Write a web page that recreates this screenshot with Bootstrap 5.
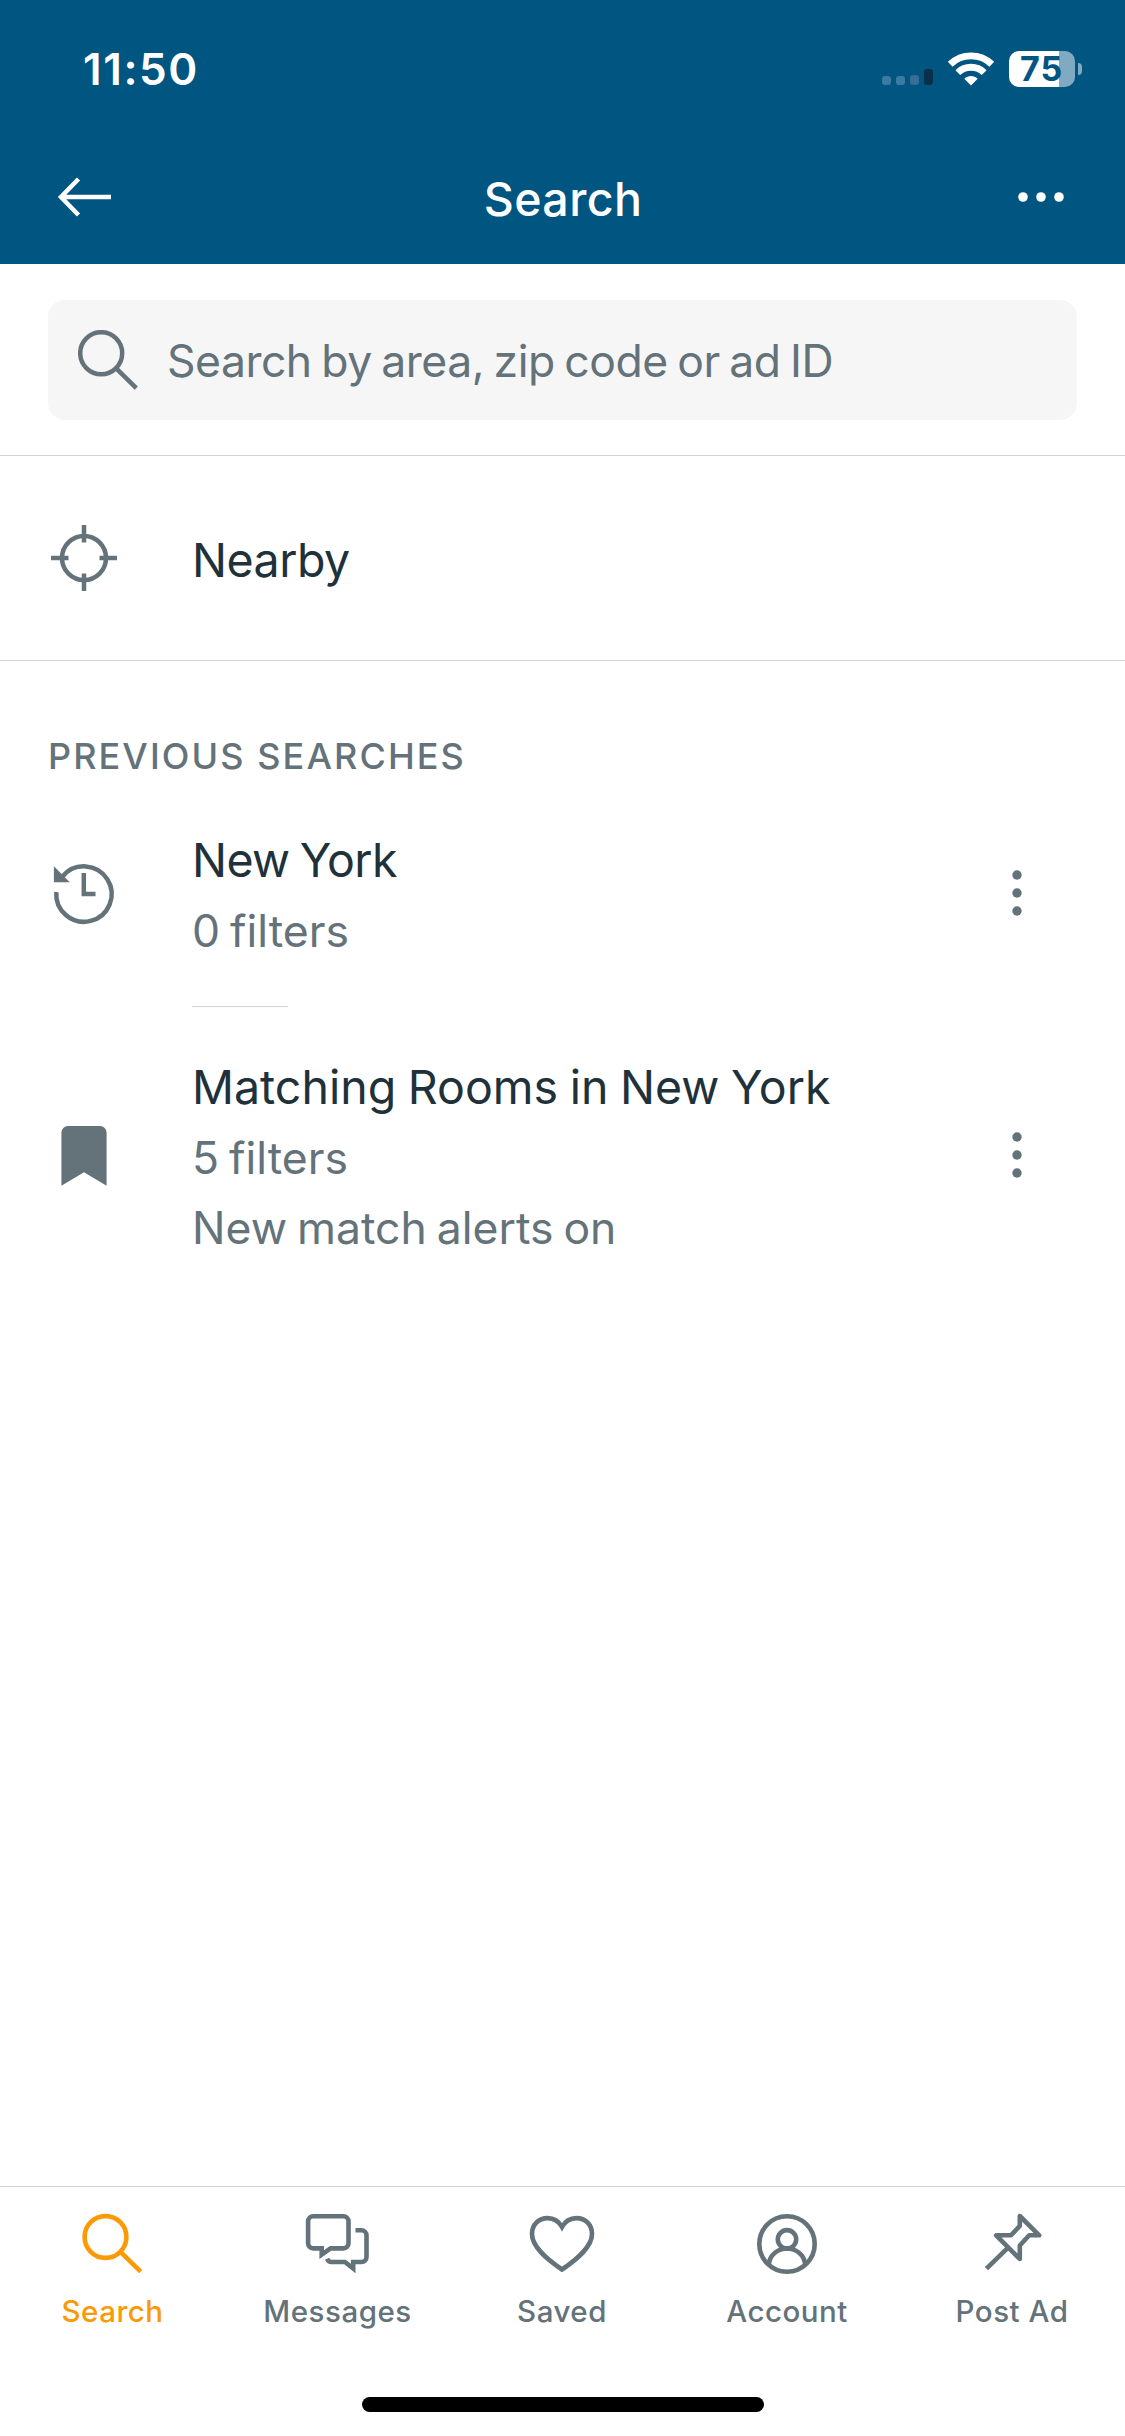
<!DOCTYPE html>
<html lang="en">
<head>
<meta charset="utf-8">
<meta name="viewport" content="width=device-width, initial-scale=1">
<title>Search</title>
<link rel="stylesheet" href="https://cdn.jsdelivr.net/npm/bootstrap@5.3.0/dist/css/bootstrap.min.css">
<style>
  :root { --brand: #005581; --slate: #64727a; --ink: #20313a; --accent: #fb9a04; --rule: #d1d3d5; }
  body { font-family: Inter, "Liberation Sans", sans-serif; color: var(--ink); background: #fff; }
  svg { display: block; flex: none; }
  .app { min-height: 2436px; }
  .app-header { background: var(--brand); height: 264px; }
  .status-row { height: 130px; padding: 8px 43px 0 82px; }
  .clock { font-size: 44px; font-weight: 600; letter-spacing: 1.6px; line-height: 50px; padding-left: 1px; }
  .title-row { height: 134px; padding: 0 60px 0 57px; }
  .title-row h1 { font-size: 46.5px; font-weight: 500; letter-spacing: .4px; line-height: 60px; padding: 4px 4px 0 0; }
  .signal { gap: 5px; height: 36px; padding-bottom: 2px; margin-right: 14px; }
  .signal i { width: 9px; height: 9px; border-radius: 3px; background: #3a7ba0; }
  .signal i:nth-child(3) { height: 10px; background: #376d97; }
  .signal i:nth-child(4) { height: 16px; background: #0b304b; }
  .battery { width: 66px; height: 36px; border-radius: 10px; margin-left: 14px;
    background: linear-gradient(90deg, #fff 0 50px, #80aac2 50px); }
  .battery span { color: var(--brand); font-size: 34px; font-weight: 700; letter-spacing: 1px; line-height: 36px; padding-left: 11px; }
  .battery-cap { width: 4px; height: 12px; margin-left: 3px; border-radius: 0 5px 5px 0; background: #80aac2; }
  .search-area { height: 192px; padding: 36px 48px 35px; border-color: var(--rule) !important; }
  .search-box { background: #f6f6f6; border-radius: 17px; height: 120px; padding-left: 30px; gap: 29px; }
  .search-box input, .search-box input:focus { font-size: 44.5px; letter-spacing: -.5px; word-spacing: -2.4px; line-height: 60px; padding: 2px 0 0; height: 120px; color: var(--ink); }
  .search-box input::placeholder { color: var(--slate); opacity: 1; }
  .nearby { height: 205px; border-color: var(--rule) !important; }
  .entry { padding: 0 48px; gap: 72px; }
  .entry-title { font-size: 46.5px; line-height: 71px; word-spacing: -1.5px; }
  .entry-sub { font-size: 44.5px; line-height: 70.5px; word-spacing: -2.6px; color: var(--slate); }
  .entry-text { padding-top: 4px; }
  .tight { letter-spacing: -.6px; word-spacing: -2.4px; }
  .snug { letter-spacing: -.5px; }
  .kebab { margin: 0 48px 2px 0; }
  .section-label { font-size: 36px; font-weight: 500; letter-spacing: 2.08px; line-height: 40px; color: var(--slate); padding: 75px 48px 45px; }
  .short-rule { width: 96px; height: 1px; background: var(--rule); margin: 39px 0 41px 192px; }
  .tab-bar { height: 250px; border-color: var(--rule) !important; }
  .tab-item { color: var(--slate); font-size: 29.5px; font-weight: 500; letter-spacing: .5px; line-height: 36px; padding: 21px .5px 0; gap: 13px; }
  .tab-item:nth-child(n+3) { padding: 21px 1px 0 0; }
  .tab-item.active { color: var(--accent); }
  .home-bar { width: 402px; height: 15px; border-radius: 8px; background: #000; margin-bottom: 24px; }
</style>
</head>
<body>
<div class="app d-flex flex-column">

  <header class="app-header text-white">
    <div class="status-row d-flex align-items-center justify-content-between">
      <span class="clock">11:50</span>
      <div class="d-flex align-items-center">
        <div class="signal d-flex align-items-end"><i></i><i></i><i></i><i></i></div>
        <svg width="48" height="34" viewBox="0 0 48 34" fill="none" stroke="#fff" stroke-width="6.8">
          <path d="M3.200 12.200a30 30 0 0 1 41.600 0"/>
          <path d="M10.800 20.600a19 19 0 0 1 26.400 0"/>
          <path d="M24 33.500l-6.700-6.800c3.800-3.600 9.600-3.600 13.400 0z" fill="#fff" stroke="none"/>
        </svg>
        <div class="battery d-flex align-items-center"><span>75</span></div>
        <div class="battery-cap"></div>
      </div>
    </div>
    <nav class="title-row d-flex align-items-center justify-content-between">
      <svg width="56" height="40" viewBox="0 0 56 40" fill="none" stroke="#fff" stroke-width="4.500"><path d="M54 20H4M21.500 2L4 20l17.500 18"/></svg>
      <h1 class="m-0">Search</h1>
      <svg width="48" height="12" viewBox="0 0 48 12" fill="#fff"><circle cx="6" cy="6" r="4.800"/><circle cx="24" cy="6" r="4.800"/><circle cx="42" cy="6" r="4.800"/></svg>
    </nav>
  </header>

  <section class="search-area border-bottom">
    <div class="search-box d-flex align-items-center">
      <svg width="60" height="60" viewBox="0 0 60 60" fill="none" stroke="#64727a" stroke-width="4.500"><circle cx="23.200" cy="23.200" r="21"/><path d="M38.200 38.400L58.300 58.200"/></svg>
      <input class="form-control border-0 bg-transparent shadow-none" type="text" placeholder="Search by area, zip code or ad ID">
    </div>
  </section>

  <section class="nearby entry border-bottom d-flex align-items-center">
    <svg width="72" height="72" viewBox="0 0 72 72" fill="none" stroke="#64727a" stroke-width="4.500"><circle cx="36" cy="36" r="22"/><path d="M36 3v17.500M36 51.500v17.500M3 36h17.500M51.500 36h17.500"/></svg>
    <div class="entry-title entry-text snug">Nearby</div>
  </section>

  <main class="flex-grow-1">
    <h2 class="section-label m-0">PREVIOUS SEARCHES</h2>
    <div class="entry d-flex align-items-center">
      <svg width="72" height="72" viewBox="0 0 72 72" fill="none" stroke="#64727a" stroke-width="4.500">
        <path d="M8.300 34A27.700 27.700 0 1 0 14.500 18.500"/><path d="M35.800 15v21H47.500"/><path d="M5.900 8.300v16h15.800z" fill="#64727a" stroke="none"/>
      </svg>
      <div class="entry-text flex-grow-1">
        <div class="entry-title tight">New York</div>
        <div class="entry-sub">0 filters</div>
      </div>
      <svg class="kebab" width="24" height="48" viewBox="0 0 24 48" fill="#64727a"><circle cx="12" cy="6" r="4.700"/><circle cx="12" cy="24" r="4.700"/><circle cx="12" cy="42" r="4.700"/></svg>
    </div>
    <div class="short-rule"></div>
    <div class="entry d-flex align-items-center">
      <svg width="72" height="72" viewBox="0 0 72 72" fill="#64727a"><path d="M13.400 65.700V12.500a6.500 6.500 0 0 1 6.500-6.500h32.200a6.500 6.500 0 0 1 6.500 6.500v53.200L36 52.300z"/></svg>
      <div class="entry-text flex-grow-1">
        <div class="entry-title">Matching Rooms in New York</div>
        <div class="entry-sub">5 filters</div>
        <div class="entry-sub">New match alerts on</div>
      </div>
      <svg class="kebab" width="24" height="48" viewBox="0 0 24 48" fill="#64727a"><circle cx="12" cy="6" r="4.700"/><circle cx="12" cy="24" r="4.700"/><circle cx="12" cy="42" r="4.700"/></svg>
    </div>
  </main>

  <footer class="tab-bar border-top d-flex flex-column justify-content-between align-items-center">
    <nav class="row g-0 w-100">
      <div class="tab-item active col d-flex flex-column align-items-center">
        <svg width="72" height="72" viewBox="0 0 72 72" fill="none" stroke="currentColor" stroke-width="4.600"><circle cx="28.500" cy="29" r="20.900"/><path d="M43.200 43.700L63.700 63.700"/></svg>
        <span>Search</span>
      </div>
      <div class="tab-item col d-flex flex-column align-items-center">
        <svg width="72" height="72" viewBox="0 0 72 72" fill="none" stroke="currentColor" stroke-width="4.600">
          <path d="M28.600 40.400H41.500a5 5 0 0 0 5-5V13.300a5 5 0 0 0-5-5H11.100a5 5 0 0 0-5 5V35.400a5 5 0 0 0 5 5H19.700V46.600z"/>
          <path d="M53.500 22.300h6a5 5 0 0 1 5 5V49a5 5 0 0 1-5 5H51.200v6.500L43 54H29.500Q26.500 54 25 50.800"/>
        </svg>
        <span>Messages</span>
      </div>
      <div class="tab-item col d-flex flex-column align-items-center">
        <svg width="72" height="72" viewBox="0 0 72 72" fill="none" stroke="currentColor" stroke-width="4.600"><path d="M36 61.500C20 50.500 6 38.500 6 26C6 16.500 13 10.100 21.500 10.100C28 10.100 33 13.500 36 19C39 13.500 44 10.100 50.500 10.100C59 10.100 66 16.500 66 26C66 38.500 52 50.500 36 61.500z"/></svg>
        <span>Saved</span>
      </div>
      <div class="tab-item col d-flex flex-column align-items-center">
        <svg width="72" height="72" viewBox="0 0 72 72" fill="none" stroke="currentColor" stroke-width="4.600"><circle cx="36" cy="36" r="27.700"/><circle cx="36" cy="31.300" r="9.200"/><path d="M17.800 56C19 46.500 27 40.500 36 40.500S53 46.500 54.200 56"/></svg>
        <span>Account</span>
      </div>
      <div class="tab-item col d-flex flex-column align-items-center">
        <svg width="72" height="72" viewBox="0 0 72 72" fill="none" stroke="currentColor" stroke-width="4.600" stroke-linejoin="round"><path d="M43.800 8L63.200 27.300H53.200L43.800 37.500V51L20.200 27.300H35L43.800 17.900z"/><path d="M32.300 39.300L10.500 60.700"/></svg>
        <span>Post Ad</span>
      </div>
    </nav>
    <div class="home-bar"></div>
  </footer>
</div>
<script src="https://cdn.jsdelivr.net/npm/bootstrap@5.3.0/dist/js/bootstrap.bundle.min.js"></script>
</body>
</html>
